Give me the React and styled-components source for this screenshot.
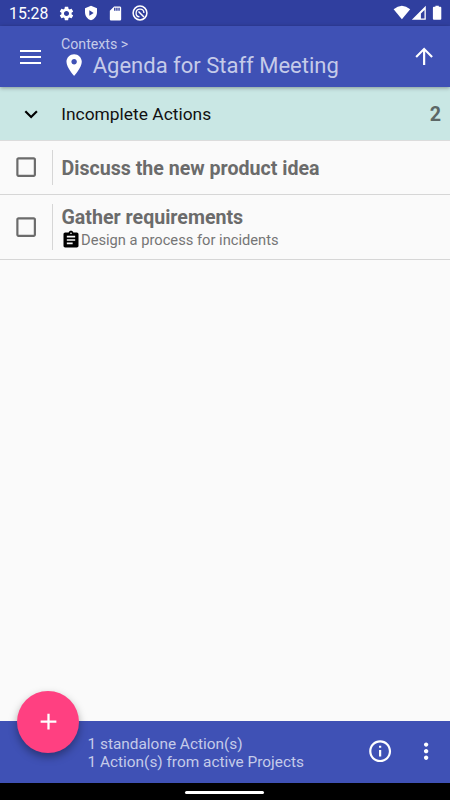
import React, { useState } from "react";
import styled, { createGlobalStyle } from "styled-components";

const actions = [
  { id: 1, name: "Discuss the new product idea", height: 54 },
  { id: 2, name: "Gather requirements", project: "Design a process for incidents", height: 65 },
];

const paths = {
  gear: "M19.14 12.94c.04-.3.06-.61.06-.94 0-.32-.02-.64-.07-.94l2.03-1.58c.18-.14.23-.41.12-.61l-1.92-3.32c-.12-.22-.37-.29-.59-.22l-2.39.96c-.5-.38-1.03-.7-1.62-.94l-.36-2.54c-.04-.24-.24-.41-.48-.41h-3.84c-.24 0-.43.17-.47.41l-.36 2.54c-.59.24-1.13.57-1.62.94l-2.39-.96c-.22-.08-.47 0-.59.22L2.74 8.87c-.12.21-.08.47.12.61l2.03 1.58c-.05.3-.09.63-.09.94s.02.64.07.94l-2.03 1.58c-.18.14-.23.41-.12.61l1.92 3.32c.12.22.37.29.59.22l2.39-.96c.5.38 1.03.7 1.62.94l.36 2.54c.05.24.24.41.48.41h3.84c.24 0 .44-.17.47-.41l.36-2.54c.59-.24 1.13-.56 1.62-.94l2.39.96c.22.08.47 0 .59-.22l1.92-3.32c.12-.22.07-.47-.12-.61l-2.01-1.58zM12 15.6c-1.98 0-3.6-1.62-3.6-3.6s1.62-3.6 3.6-3.6 3.6 1.62 3.6 3.6-1.62 3.6-3.6 3.6z",
  shield: "M12 1L3 5v6c0 5.55 3.84 10.74 9 12 5.16-1.26 9-6.45 9-12V5l-9-4zM9.500 8l6.500 4-6.500 4z",
  sdCard: "M18 2h-8L4.02 8 4 20c0 1.100.9 2 2 2h12c1.100 0 2-.9 2-2V4c0-1.100-.9-2-2-2zm-6 6h-2V4h2v4zm3 0h-2V4h2v4zm3 0h-2V4h2v4z",
  arrowUp: "M4 12l1.410 1.410L11 7.830V20h2V7.830l5.580 5.590L20 12l-8-8-8 8z",
  place: "M12 2C8.130 2 5 5.130 5 9c0 5.250 7 13 7 13s7-7.750 7-13c0-3.870-3.130-7-7-7zm0 9.500c-1.380 0-2.500-1.120-2.500-2.500s1.120-2.500 2.500-2.500 2.500 1.120 2.500 2.500-1.120 2.500-2.500 2.500z",
  expand: "M16.590 8.590L12 13.170 7.410 8.590 6 10l6 6 6-6z",
  checkbox: "M19 5v14H5V5h14m0-2H5c-1.100 0-2 .9-2 2v14c0 1.100.9 2 2 2h14c1.100 0 2-.9 2-2V5c0-1.100-.9-2-2-2z",
  checked: "M19 3H5c-1.100 0-2 .9-2 2v14c0 1.100.9 2 2 2h14c1.100 0 2-.9 2-2V5c0-1.100-.9-2-2-2zm-9 14l-5-5 1.410-1.410L10 14.170l7.590-7.590L19 8l-9 9z",
  clipboard: "M19 3h-4.180C14.400 1.840 13.300 1 12 1s-2.400.84-2.820 2H5c-1.100 0-2 .9-2 2v14c0 1.100.9 2 2 2h14c1.100 0 2-.9 2-2V5c0-1.100-.9-2-2-2zm-7 0c.55 0 1 .45 1 1s-.45 1-1 1-1-.45-1-1 .45-1 1-1zm2 14H7v-2h7v2zm3-4H7v-2h10v2zm0-4H7V7h10v2z",
  info: "M11 7h2v2h-2zm0 4h2v6h-2zm1-9C6.480 2 2 6.480 2 12s4.480 10 10 10 10-4.480 10-10S17.520 2 12 2zm0 18c-4.410 0-8-3.590-8-8s3.590-8 8-8 8 3.590 8 8-3.590 8-8 8z",
  more: "M12 8c1.100 0 2-.9 2-2s-.9-2-2-2-2 .9-2 2 .9 2 2 2zm0 2c-1.100 0-2 .9-2 2s.9 2 2 2 2-.9 2-2-.9-2-2-2zm0 6c-1.100 0-2 .9-2 2s.9 2 2 2 2-.9 2-2-.9-2-2-2z",
  add: "M19 13h-6v6h-2v-6H5v-2h6V5h2v6h6v2z",
};

const Icon = ({ name, size = 26.25 }) => (
  <svg width={size} height={size} viewBox="0 0 24 24" fill="currentColor" fillRule="evenodd">
    <path d={paths[name]} />
  </svg>
);

const SyncOffIcon = () => (
  <svg width="16" height="16" viewBox="0 0 16 16" fill="none" stroke="currentColor">
    <circle cx="8" cy="8" r="6.900" strokeWidth="1.500" />
    <path d="M7.500 11.900A3.900 3.900 0 1 1 11.900 8" strokeWidth="1.300" />
    <path d="M6.500 6.500L12 12" strokeWidth="1.500" />
  </svg>
);

const StatusIcons = () => (
  <svg width="50" height="16" viewBox="0 0 50 16" fill="currentColor">
    <path d="M.6 4.300Q8.900-3 17.200 4.300L8.900 14.300z" />
    <path
      fillRule="evenodd"
      d="M32.800.8v14H18.800zM31.500 5l-3.600 3.600v4.900h3.600z"
    />
    <path d="M42.400 1.800v-1h3.400v1h1.500q1 0 1 1v11q0 1-1 1h-6.400q-1 0-1-1v-11q0-1 1-1z" />
  </svg>
);

export default function App() {
  const [open, setOpen] = useState(true);
  const [done, setDone] = useState([]);

  const toggleDone = (id) => {
    setDone((prev) => (prev.includes(id) ? prev.filter((x) => x !== id) : [...prev, id]));
  };

  return (
    <>
      <GlobalStyle />
      <Screen>
        <StatusBar>
          <Clock>15:28</Clock>
          <Notifications>
            <Icon name="gear" size={17} />
            <Icon name="shield" size={16} />
            <Icon name="sdCard" size={17} />
            <SyncOffIcon />
          </Notifications>
          <StatusIcons />
        </StatusBar>

        <Toolbar>
          <MenuButton aria-label="Menu">
            <MenuLine />
            <MenuLine />
            <MenuLine />
          </MenuButton>
          <Heading>
            <Breadcrumb>Contexts &gt;</Breadcrumb>
            <Title>
              <Icon name="place" />
              <TitleText>Agenda for Staff Meeting</TitleText>
            </Title>
          </Heading>
          <IconButton aria-label="Up">
            <Icon name="arrowUp" />
          </IconButton>
        </Toolbar>

        <GroupHeader onClick={() => setOpen(!open)}>
          <Chevron $open={open}>
            <Icon name="expand" />
          </Chevron>
          <GroupName>Incomplete Actions</GroupName>
          <GroupCount>2</GroupCount>
        </GroupHeader>

        <List>
          {open &&
            actions.map((action) => (
              <ActionRow key={action.id} $height={action.height}>
                <CheckButton aria-label="Done" onClick={() => toggleDone(action.id)}>
                  <Icon name={done.includes(action.id) ? "checked" : "checkbox"} />
                </CheckButton>
                <ActionDetails>
                  <ActionName>{action.name}</ActionName>
                  {action.project && (
                    <Project>
                      <Icon name="clipboard" size={20} />
                      <ProjectName>{action.project}</ProjectName>
                    </Project>
                  )}
                </ActionDetails>
              </ActionRow>
            ))}
        </List>

        <BottomBar>
          <Fab aria-label="Add">
            <Icon name="add" size={27} />
          </Fab>
          <Summary>
            <div>1 standalone Action(s)</div>
            <div>1 Action(s) from active Projects</div>
          </Summary>
          <IconButton aria-label="Info">
            <Icon name="info" />
          </IconButton>
          <MoreButton aria-label="More">
            <Icon name="more" />
          </MoreButton>
        </BottomBar>

        <NavBar>
          <NavHandle />
        </NavBar>
      </Screen>
    </>
  );
}

const GlobalStyle = createGlobalStyle`
  * {
    box-sizing: border-box;
  }

  body {
    margin: 0;
    font-family: Roboto, sans-serif;
  }

  svg {
    display: block;
    flex-shrink: 0;
  }

  button {
    border: 0;
    padding: 0;
    background: none;
    color: inherit;
    cursor: pointer;
  }
`;

const Screen = styled.div`
  display: flex;
  flex-direction: column;
  width: 450px;
  height: 800px;
  overflow: hidden;
  background-color: #fafafa;
`;

const StatusBar = styled.div`
  display: flex;
  align-items: center;
  height: 26px;
  padding: 0 7.5px 0 9px;
  background-color: #303f9f;
  color: white;
`;

const Clock = styled.div`
  width: 49px;
  font-size: 15.8px;
  line-height: 26px;
  padding-top: 2px;
`;

const Notifications = styled.div`
  display: flex;
  flex: 1;
  align-items: center;
  gap: 8px;
`;

const Toolbar = styled.div`
  display: flex;
  align-items: center;
  height: 61px;
  padding-right: 13px;
  background-color: #3f51b5;
  color: white;
  box-shadow: 0 1px 4px rgba(0, 0, 0, 0.35);
  z-index: 1;
`;

const MenuButton = styled.button`
  display: flex;
  flex-direction: column;
  gap: 4px;
  width: 21px;
  margin: 0 20px;
`;

const MenuLine = styled.span`
  height: 2px;
  background-color: white;
`;

const Heading = styled.div`
  flex: 1;
  height: 61px;
  padding-top: 9px;
`;

const Breadcrumb = styled.div`
  font-size: 14.2px;
  line-height: 18px;
  color: #c5cbe9;
`;

const Title = styled.div`
  display: flex;
  align-items: center;
  height: 26px;
  margin-top: -1px;
`;

const TitleText = styled.div`
  margin-left: 5.5px;
  padding-top: 1px;
  font-size: 22px;
  line-height: 26px;
  color: #c5cbe9;
`;

const IconButton = styled.button`
  display: flex;
`;

const MoreButton = styled(IconButton)`
  margin-left: 20px;
`;

const GroupHeader = styled.div`
  display: flex;
  align-items: center;
  height: 54px;
  padding: 1px 9px 0 17.5px;
  background-color: #c9e7e4;
  border-bottom: 1px solid #dcdcdc;
  cursor: pointer;
`;

const Chevron = styled.div`
  margin-right: 17.5px;
  transform: ${({ $open }) => ($open ? "none" : "rotate(-90deg)")};
`;

const GroupName = styled.div`
  flex: 1;
  font-size: 17.4px;
  color: #111;
`;

const GroupCount = styled.div`
  font-size: 19.7px;
  font-weight: bold;
  color: #5c6766;
`;

const List = styled.div`
  flex: 1;
`;

const ActionRow = styled.div`
  display: flex;
  align-items: center;
  height: ${({ $height }) => $height}px;
  padding: 9px 0;
  border-bottom: 1px solid #d6d6d6;
`;

const CheckButton = styled.button`
  display: flex;
  align-items: center;
  align-self: stretch;
  width: 53px;
  padding-left: 13px;
  border-right: 1px solid #d6d6d6;
  color: #6b6b6b;
`;

const ActionDetails = styled.div`
  padding: 2px 0 0 8.5px;
`;

const ActionName = styled.div`
  font-size: 19.6px;
  font-weight: bold;
  line-height: 24px;
  color: #6b6b6b;
`;

const Project = styled.div`
  display: flex;
  align-items: center;
  height: 20px;
  margin-left: -0.5px;
  color: black;
`;

const ProjectName = styled.div`
  font-size: 14.7px;
  color: #757575;
`;

const BottomBar = styled.div`
  display: flex;
  align-items: center;
  height: 62px;
  padding: 0 11px 1px 17px;
  background-color: #3f51b5;
  color: white;
`;

const Fab = styled.button`
  display: flex;
  align-items: center;
  justify-content: center;
  width: 62px;
  height: 62px;
  margin-top: -60px;
  border-radius: 50%;
  background-color: #ff4081;
  box-shadow: 0 4px 8px rgba(0, 0, 0, 0.35);
`;

const Summary = styled.div`
  flex: 1;
  margin-left: 8.5px;
  padding-top: 3px;
  font-size: 15.4px;
  line-height: 18px;
  color: #c5cbe9;
`;

const NavBar = styled.div`
  display: flex;
  align-items: center;
  justify-content: center;
  height: 17px;
  padding: 1px 1px 0 0;
  background-color: black;
`;

const NavHandle = styled.div`
  width: 79px;
  height: 3px;
  border-radius: 2px;
  background-color: white;
`;
